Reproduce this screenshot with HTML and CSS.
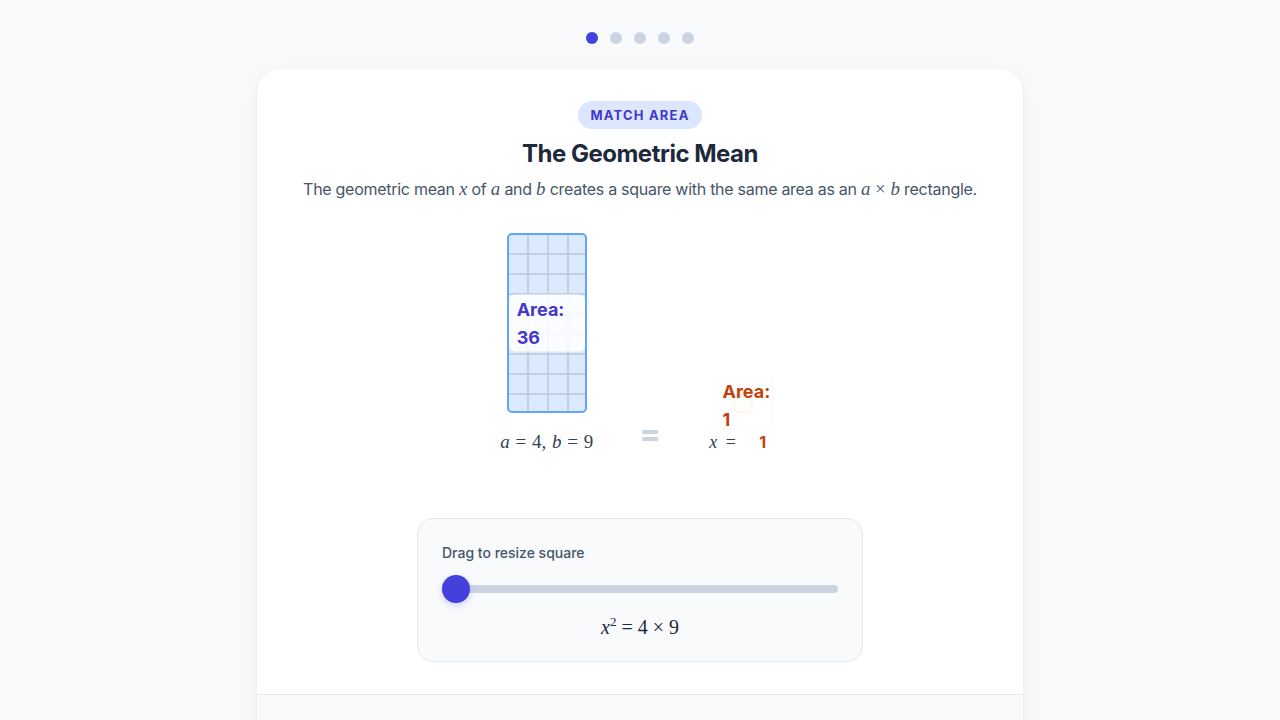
FILE: index.html
```html
<!DOCTYPE html>
<html>
<head>
  <title>The Geometric Mean</title>
  <meta charset="UTF-8">
  <link rel="stylesheet" href="styles.css">
</head>
<body>
  <div class="dots">
    <span class="dot active"></span>
    <span class="dot"></span>
    <span class="dot"></span>
    <span class="dot"></span>
    <span class="dot"></span>
  </div>

  <div class="card">
    <div class="card-body">
      <span class="badge">Match Area</span>
      <h1>The Geometric Mean</h1>
      <p class="intro">
        The geometric mean <span class="m"><i>x</i></span> of <span class="m"><i>a</i></span> and <span class="m"><i>b</i></span> creates a square with the same area as an <span class="m"><i>a</i> × <i>b</i></span> rectangle.
      </p>

      <div class="viz">
        <div class="shape-col rect-col">
          <div class="rect">
            <div class="area-label blue">Area: 36</div>
          </div>
          <div class="shape-caption m"><i>a</i> = 4, <i>b</i> = 9</div>
        </div>

        <div class="equals">=</div>

        <div class="shape-col square-col">
          <div class="square-wrap">
            <div class="square">
              <div class="area-label orange small">Area: 1</div>
            </div>
          </div>
          <div class="shape-caption"><span class="m"><i>x</i> <span class="rel">=</span></span><span class="x-val">1</span></div>
        </div>
      </div>

      <div class="slider-panel">
        <div class="slider-label">Drag to resize square</div>
        <div class="slider">
          <div class="track"></div>
          <div class="thumb"></div>
        </div>
        <div class="formula m"><i>x</i><sup>2</sup> = 4 × 9</div>
      </div>
    </div>
    <div class="card-footer"></div>
  </div>
</body>
</html>
```

FILE: styles.css
```css
html, body {
  margin: 0;
  padding: 0;
}
body {
  background-color: #f8fafc;
  font-family: Inter, "Noto Sans", sans-serif;
  color: #1e293b;
  padding-top: 32px;
}
.dots {
  display: flex;
  justify-content: center;
  gap: 12px;
  margin-bottom: 25px;
}
.dot {
  width: 12px;
  height: 12px;
  border-radius: 50%;
  background-color: #cbd5e1;
}
.dot.active {
  background-color: #4340db;
}
.card {
  width: 766px;
  margin: 0 auto;
  background-color: #fff;
  border-radius: 24px;
  box-shadow: 0 4px 20px rgba(15, 23, 42, 0.06), 0 1px 3px rgba(15, 23, 42, 0.04);
  overflow: hidden;
}
.card-body {
  padding: 32px 32px 32px;
  display: flex;
  flex-direction: column;
  align-items: center;
}
.badge {
  display: inline-block;
  padding: 0 12px;
  height: 28px;
  line-height: 28px;
  border-radius: 14px;
  background-color: #dbe7fe;
  color: #4338ca;
  font-size: 13px;
  font-weight: 700;
  letter-spacing: 1.2px;
  text-transform: uppercase;
}
h1 {
  margin: 9px 0 0;
  font-size: 24px;
  line-height: 32px;
  font-weight: 700;
  letter-spacing: -0.5px;
  color: #1e293b;
}
.intro {
  margin: 7px 0 0;
  font-size: 16px;
  line-height: 24px;
  letter-spacing: -0.28px;
  color: #475569;
}
.m {
  font-family: "Liberation Serif", "DejaVu Serif", serif;
  font-size: 1.18em;
  line-height: 1;
  letter-spacing: 0;
}
.m i {
  font-style: italic;
}
.viz {
  display: flex;
  align-items: flex-end;
  justify-content: center;
  gap: 46px;
  margin-top: 32px;
  padding-left: 4px;
}
.shape-col {
  display: flex;
  flex-direction: column;
  align-items: center;
}
.rect {
  position: relative;
  width: 76px;
  height: 176px;
  border: 2px solid #60a5fa;
  border-radius: 5px;
  background-color: #dbeafe;
  background-image:
    linear-gradient(to right, transparent 18.5px, #c3cee0 18.5px),
    linear-gradient(to bottom, transparent 18.5px, #c3cee0 18.5px);
  background-size: 20px 20px;
  background-position: 0 0;
}
.area-label {
  position: absolute;
  top: 50%;
  left: 50%;
  transform: translate(-50%, -50%);
  box-sizing: border-box;
  padding: 0 8px;
  font-size: 18px;
  line-height: 28px;
  font-weight: 700;
  background-color: rgba(255, 255, 255, 0.85);
  border-radius: 6px;
}
.area-label.blue {
  width: 76px;
  padding-top: 1px;
  color: #4338ca;
}
.area-label.orange {
  color: #c2410c;
}
.area-label.small {
  width: 60px;
  height: 53px;
  padding-bottom: 2px;
  background-color: rgba(255, 255, 255, 0.7);
  border: 1px dotted #f1f5f9;
  border-radius: 4px;
}
.shape-caption {
  margin-top: 17px;
  font-size: 16px;
  line-height: 24px;
  color: #334155;
}
.rect-col .shape-caption {
  font-size: 19px;
  line-height: 24px;
  word-spacing: 1px;
}
.equals {
  width: 20px;
  font-size: 32px;
  font-weight: 700;
  line-height: 28px;
  color: #cbd5e1;
  margin-bottom: 6px;
  text-align: center;
}
.square-col {
  margin-left: 4px;
}
.square-wrap {
  display: flex;
  justify-content: center;
  padding-right: 6px;
}
.square {
  position: relative;
  width: 16px;
  height: 16px;
  border: 2px solid #fde3bb;
  border-radius: 4px;
  background-color: #fffaf1;
}
.square-col .shape-caption .m {
  font-size: 18px;
  color: #334155;
}
.rel {
  margin-left: 4px;
}
.x-val {
  display: inline-block;
  width: 48px;
  padding-left: 6px;
  box-sizing: border-box;
  text-align: center;
  font-weight: 700;
  color: #c2410c;
}
.slider-panel {
  box-sizing: border-box;
  width: 446px;
  margin-top: 64px;
  padding: 24px 24px 22px;
  background-color: #f8fafc;
  border: 1px solid #e2e8f0;
  border-radius: 16px;
}
.slider-label {
  font-size: 14px;
  line-height: 20px;
  font-weight: 500;
  color: #475569;
}
.slider {
  position: relative;
  height: 28px;
  margin-top: 12px;
  display: flex;
  align-items: center;
}
.track {
  width: 100%;
  height: 8px;
  border-radius: 4px;
  background-color: #cbd5e1;
}
.thumb {
  position: absolute;
  left: 0;
  top: 0;
  width: 28px;
  height: 28px;
  border-radius: 50%;
  background-color: #4340db;
  box-shadow: 0 2px 6px rgba(67, 64, 219, 0.25);
}
.formula {
  margin-top: 12px;
  text-align: center;
  font-size: 20px;
  line-height: 24px;
  color: #1e293b;
}
.formula sup {
  font-size: 13px;
  vertical-align: 8px;
  line-height: 0;
}
.card-footer {
  height: 80px;
  background-color: #f8fafc;
  border-top: 1px solid #e2e8f0;
}
```
